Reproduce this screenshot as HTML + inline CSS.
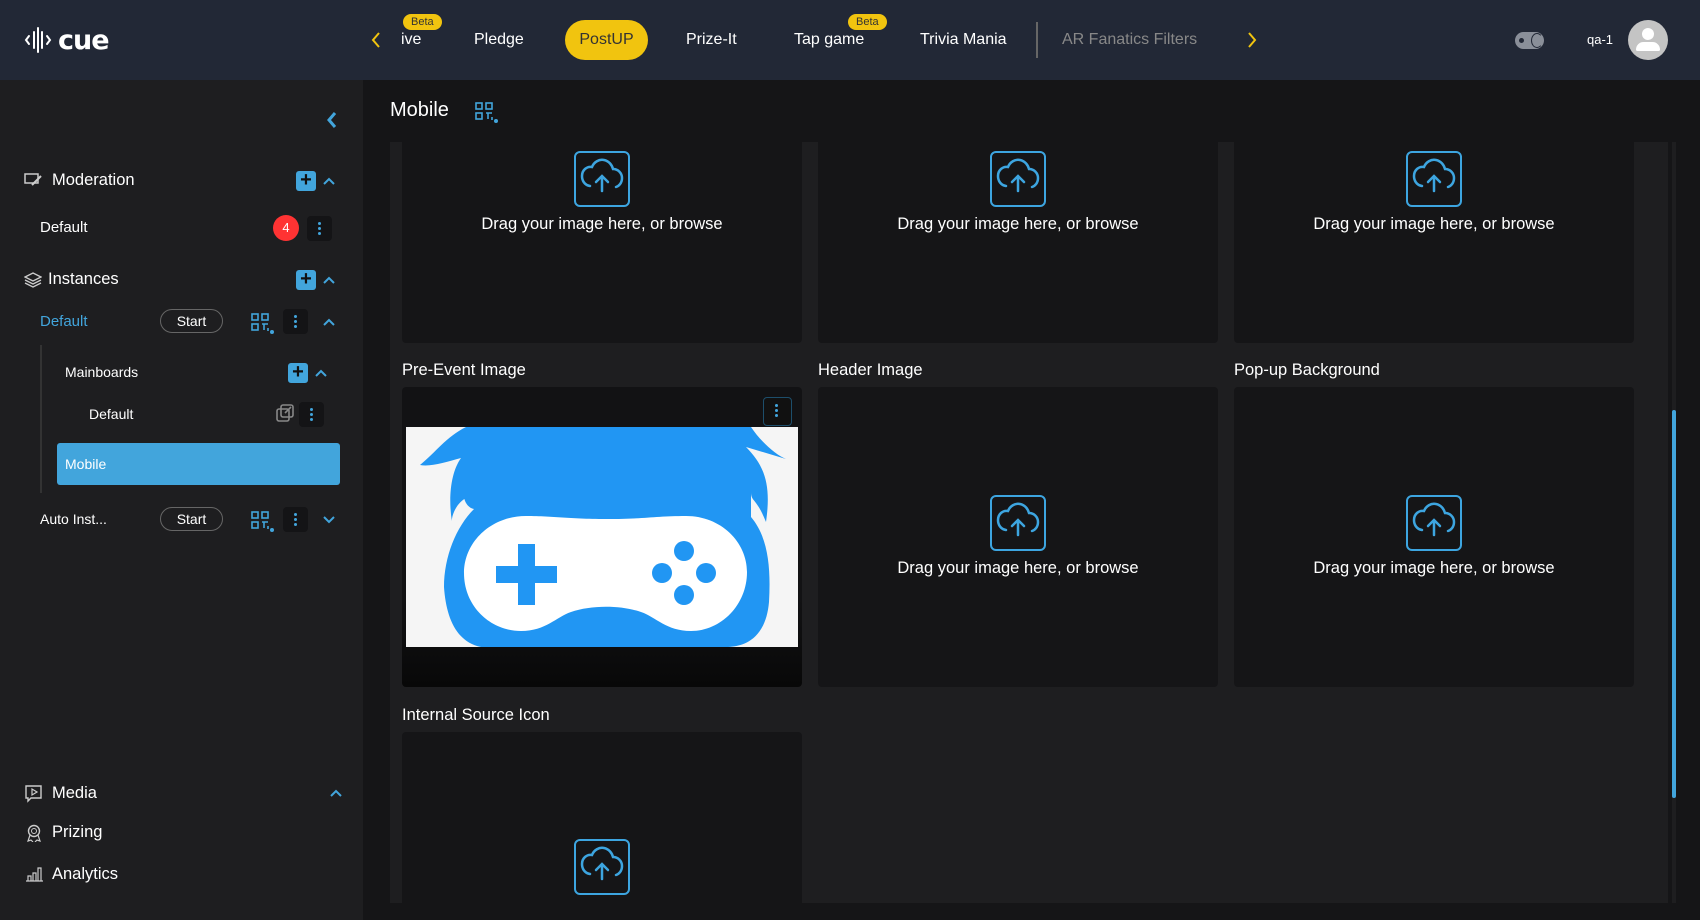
<!DOCTYPE html>
<html><head><meta charset="utf-8">
<style>
*{box-sizing:border-box;margin:0;padding:0}
body{width:1700px;height:920px;overflow:hidden;background:#151517;font-family:"Liberation Sans",sans-serif;color:#fff;position:relative}
.abs{position:absolute}
.hdr{left:0;top:0;width:1700px;height:80px;background:#222836}
.nav{top:31px;font-size:16px;color:#fff;white-space:nowrap}
.beta{background:#f1c40f;color:#333;font-size:11px;border-radius:9px;padding:2px 8px;top:14px}
.side{left:0;top:80px;width:363px;height:840px;background:#1e1e20}
.t{font-size:15px;color:#fff;white-space:nowrap}
.plus{width:20px;height:20px;background:#42a5dc;border-radius:3px;color:#111;font-size:20px;line-height:19px;text-align:center;font-weight:bold}
.dots{width:25px;height:25px;background:#141416;border-radius:4px}
.dots:before{content:"";position:absolute;left:11px;top:6px;width:3px;height:3px;border-radius:50%;background:#42a5dc;box-shadow:0 5px 0 #42a5dc,0 10px 0 #42a5dc}
.pill{width:63px;height:24px;border:1px solid #666;border-radius:12px;font-size:14px;text-align:center;line-height:22px}
.card{background:#151517;border-radius:4px}
.up{width:56px;height:56px;border:2px solid #3da5e0;border-radius:6px}
.dt{font-size:16.5px;color:#fff;white-space:nowrap;text-align:center;width:400px}
.lbl{font-size:16.5px;color:#fff}
</style></head><body>
<div class="abs hdr"></div>
<svg class="abs" style="left:24px;top:24px" width="100" height="32" viewBox="0 0 100 32">
<g stroke="#fff" stroke-width="2" fill="none" stroke-linecap="round">
<path d="M5 12l-3 4 3 4M10 8v16M14 4v24M18 8v16M23 12l3 4-3 4"/></g>
<text x="34" y="25" font-family="DejaVu Sans" font-weight="bold" font-size="27" fill="#fff" letter-spacing="-1">cue</text></svg>
<svg class="abs" style="left:370px;top:31px" width="12" height="18"><path d="M9 2L3 9l6 7" stroke="#f1c40f" stroke-width="2" fill="none"/></svg>
<div class="abs beta" style="left:403px">Beta</div>
<div class="abs nav" style="left:401px">ive</div>
<div class="abs nav" style="left:474px">Pledge</div>
<div class="abs" style="left:565px;top:20px;width:83px;height:40px;border-radius:20px;background:#f1c40f;color:#333;font-size:16px;text-align:center;line-height:40px">PostUP</div>
<div class="abs nav" style="left:686px">Prize-It</div>
<div class="abs beta" style="left:848px">Beta</div>
<div class="abs nav" style="left:794px">Tap game</div>
<div class="abs nav" style="left:920px">Trivia Mania</div>
<div class="abs" style="left:1036px;top:22px;width:2px;height:36px;background:#666"></div>
<div class="abs nav" style="left:1062px;color:#888">AR Fanatics Filters</div>
<svg class="abs" style="left:1246px;top:31px" width="12" height="18"><path d="M3 2l6 7-6 7" stroke="#f1c40f" stroke-width="2" fill="none"/></svg>
<div class="abs" style="left:1515px;top:32px;width:29px;height:17px;border-radius:9px;background:#8a8f99"></div>
<div class="abs" style="left:1519px;top:38px;width:5px;height:5px;border-radius:50%;background:#222836"></div>
<div class="abs" style="left:1531px;top:33px;width:12px;height:15px;border-radius:50%;border:1.5px solid #222836;border-right-color:transparent"></div>
<div class="abs" style="left:1587px;top:32px;font-size:13px">qa-1</div>
<div class="abs" style="left:1628px;top:20px;width:40px;height:40px;border-radius:50%;background:#c4c4c4"></div>
<div class="abs" style="left:1642px;top:28px;width:12px;height:12px;border-radius:50%;background:#fff"></div>
<div class="abs" style="left:1636px;top:42px;width:24px;height:9px;border-radius:10px 10px 2px 2px;background:#fff"></div>

<div class="abs side"></div>
<svg class="abs" style="left:326px;top:111px" width="12" height="18"><path d="M9 2L3 9l6 7" stroke="#42a5dc" stroke-width="3" fill="none"/></svg>

<svg class="abs" style="left:24px;top:172px" width="20" height="16"><rect x="1" y="2" width="13" height="9" fill="none" stroke="#ccc" stroke-width="1.5"/><path d="M8 13l9-9" stroke="#ccc" stroke-width="2"/></svg>
<div class="abs t" style="left:52px;top:171px;font-size:16.5px">Moderation</div>
<div class="abs plus" style="left:296px;top:171px">+</div>
<svg class="abs" style="left:322px;top:176px" width="14" height="10"><path d="M2 8l5-5 5 5" stroke="#42a5dc" stroke-width="2" fill="none"/></svg>
<div class="abs t" style="left:40px;top:219px">Default</div>
<div class="abs" style="left:273px;top:215px;width:26px;height:26px;border-radius:50%;background:#f33;font-size:13px;text-align:center;line-height:26px">4</div>
<div class="abs dots" style="left:307px;top:216px"></div>

<svg class="abs" style="left:24px;top:272px" width="18" height="16"><path d="M9 1l8 4-8 4-8-4zM1 8l8 4 8-4M1 11l8 4 8-4" stroke="#ccc" stroke-width="1.3" fill="none"/></svg>
<div class="abs t" style="left:48px;top:270px;font-size:16.5px">Instances</div>
<div class="abs plus" style="left:296px;top:270px">+</div>
<svg class="abs" style="left:322px;top:275px" width="14" height="10"><path d="M2 8l5-5 5 5" stroke="#42a5dc" stroke-width="2" fill="none"/></svg>

<div class="abs t" style="left:40px;top:313px;color:#42a5dc">Default</div>
<div class="abs pill" style="left:160px;top:309px">Start</div>
<svg class="abs" style="left:251px;top:313px" width="25" height="22"><g stroke="#42a5dc" stroke-width="1.6" fill="none"><rect x="1" y="1" width="6" height="6"/><rect x="11" y="1" width="6" height="6"/><rect x="1" y="11" width="6" height="6"/><path d="M11 11h6M13 11v6M17 15v3"/></g><circle cx="21" cy="19" r="2" fill="#42a5dc"/></svg>
<div class="abs dots" style="left:283px;top:309px"></div>
<svg class="abs" style="left:322px;top:317px" width="14" height="10"><path d="M2 8l5-5 5 5" stroke="#42a5dc" stroke-width="2" fill="none"/></svg>
<div class="abs" style="left:40px;top:345px;width:2px;height:148px;background:#333"></div>
<div class="abs t" style="left:65px;top:364px;font-size:14px">Mainboards</div>
<div class="abs plus" style="left:288px;top:363px">+</div>
<svg class="abs" style="left:314px;top:368px" width="14" height="10"><path d="M2 8l5-5 5 5" stroke="#42a5dc" stroke-width="2" fill="none"/></svg>
<div class="abs t" style="left:89px;top:406px;font-size:14px">Default</div>
<svg class="abs" style="left:276px;top:404px" width="19" height="19"><g stroke="#888" stroke-width="1.6" fill="none"><rect x="1" y="5" width="12" height="12" rx="2"/><rect x="5" y="1" width="12" height="12" rx="2"/><path d="M9 9l6-6"/></g></svg>
<div class="abs dots" style="left:299px;top:402px"></div>
<div class="abs" style="left:57px;top:443px;width:283px;height:42px;background:#42a5dc;border-radius:3px"></div>
<div class="abs t" style="left:65px;top:456px;font-size:14px">Mobile</div>
<div class="abs t" style="left:40px;top:511px;font-size:14px">Auto Inst...</div>
<div class="abs pill" style="left:160px;top:507px">Start</div>
<svg class="abs" style="left:251px;top:511px" width="25" height="22"><g stroke="#42a5dc" stroke-width="1.6" fill="none"><rect x="1" y="1" width="6" height="6"/><rect x="11" y="1" width="6" height="6"/><rect x="1" y="11" width="6" height="6"/><path d="M11 11h6M13 11v6M17 15v3"/></g><circle cx="21" cy="19" r="2" fill="#42a5dc"/></svg>
<div class="abs dots" style="left:283px;top:507px"></div>
<svg class="abs" style="left:322px;top:515px" width="14" height="10"><path d="M2 2l5 5 5-5" stroke="#42a5dc" stroke-width="2" fill="none"/></svg>

<svg class="abs" style="left:24px;top:785px" width="20" height="18"><path d="M2 1h15v12H7l-3 3v-3H2z" stroke="#ccc" stroke-width="1.4" fill="none"/><path d="M8 4v6l5-3z" stroke="#ccc" stroke-width="1.2" fill="none"/></svg>
<div class="abs t" style="left:52px;top:784px;font-size:16.5px">Media</div>
<svg class="abs" style="left:329px;top:788px" width="14" height="10"><path d="M2 8l5-5 5 5" stroke="#42a5dc" stroke-width="2" fill="none"/></svg>
<svg class="abs" style="left:26px;top:824px" width="16" height="18"><circle cx="8" cy="7" r="5.5" stroke="#ccc" stroke-width="1.4" fill="none"/><circle cx="8" cy="7" r="2.5" stroke="#ccc" fill="none"/><path d="M4 11l-2 6 3-1 2 2M12 11l2 6-3-1-2 2" stroke="#ccc" stroke-width="1.2" fill="none"/></svg>
<div class="abs t" style="left:52px;top:823px;font-size:16.5px">Prizing</div>
<svg class="abs" style="left:25px;top:866px" width="18" height="16"><path d="M1 15h17M3 15v-5h3v5M8 15V7h3v8M13 15V2h3v13" stroke="#ccc" stroke-width="1.2" fill="none"/></svg>
<div class="abs t" style="left:52px;top:865px;font-size:16.5px">Analytics</div>

<!-- main -->
<div class="abs" style="left:390px;top:99px;font-size:20px">Mobile</div>
<svg class="abs" style="left:475px;top:102px" width="25" height="22"><g stroke="#42a5dc" stroke-width="1.6" fill="none"><rect x="1" y="1" width="6" height="6"/><rect x="11" y="1" width="6" height="6"/><rect x="1" y="11" width="6" height="6"/><path d="M11 11h6M13 11v6M17 15v3"/></g><circle cx="21" cy="19" r="2" fill="#42a5dc"/></svg>
<div class="abs" style="left:390px;top:142px;width:1278px;height:761px;background:#1e1e20"></div>
<div class="abs" style="left:1672px;top:142px;width:4px;height:761px;background:#1e1e20"></div>
<div class="abs" style="left:1672px;top:410px;width:4px;height:388px;background:#42a5dc;border-radius:2px"></div>

<div class="abs card" style="left:402px;top:142px;width:400px;height:201px;border-radius:0 0 4px 4px"></div>
<div class="abs card" style="left:818px;top:142px;width:400px;height:201px;border-radius:0 0 4px 4px"></div>
<div class="abs card" style="left:1234px;top:142px;width:400px;height:201px;border-radius:0 0 4px 4px"></div>
<div class="abs lbl" style="left:402px;top:361px">Pre-Event Image</div>
<div class="abs lbl" style="left:818px;top:361px">Header Image</div>
<div class="abs lbl" style="left:1234px;top:361px">Pop-up Background</div>
<div class="abs card" style="left:402px;top:387px;width:400px;height:300px;background:linear-gradient(#121214 70%,#080808)"></div>
<div class="abs card" style="left:818px;top:387px;width:400px;height:300px"></div>
<div class="abs card" style="left:1234px;top:387px;width:400px;height:300px"></div>
<div class="abs lbl" style="left:402px;top:706px">Internal Source Icon</div>
<div class="abs card" style="left:402px;top:732px;width:400px;height:171px;border-radius:4px 4px 0 0"></div>

<svg class="abs" style="left:406px;top:427px" width="392" height="220" viewBox="0 0 392 220">
<rect width="392" height="220" fill="#f5f5f5"/>
<path d="M60 0H345C355 15 370 28 380 32L340 20C360 40 365 60 360 95C350 70 345 75 345 65V90C362 110 365 140 363 175C360 210 340 220 320 220H75C50 215 40 190 38 160C38 130 50 100 68 82C58 80 56 65 60 68L62 70C50 75 45 90 46 95C42 70 45 45 55 31C40 35 25 40 14 38C30 25 40 10 60 0Z" fill="#2196f3"/>
<path d="M120 89C150 89 160 92 200 92C240 92 250 89 280 89C315 89 341 115 341 145C341 178 315 204 285 204C260 204 250 190 235 185C215 178 185 178 165 185C150 190 140 204 115 204C85 204 58 180 58 146C58 115 85 89 120 89Z" fill="#fff"/>
<rect x="90" y="139" width="61" height="17" fill="#2196f3"/><rect x="112" y="117" width="17" height="61" fill="#2196f3"/>
<circle cx="278" cy="124" r="10" fill="#2196f3"/><circle cx="278" cy="168" r="10" fill="#2196f3"/><circle cx="256" cy="146" r="10" fill="#2196f3"/><circle cx="300" cy="146" r="10" fill="#2196f3"/>
</svg>
<div class="abs dots" style="left:763px;top:397px;width:29px;height:29px;border:1px solid #1d4e6b;background:#111"></div>

<svg width="0" height="0" style="position:absolute"><defs><g id="cl"><path d="M14 33C8 32 6 27 6 23C6 17 11 13 16 14C18 9 23 6 28 7C33 8 36 12 37 16C42 16 46 20 46 25C46 30 43 33 40 34" stroke="#3da5e0" stroke-width="2.5" fill="none" stroke-linecap="round"/><path d="M26 38V24M20 29l6-6 6 6" stroke="#3da5e0" stroke-width="2.5" fill="none" stroke-linecap="round"/></g></defs></svg>

<div class="abs up" style="left:574px;top:151px"><svg width="52" height="52"><use href="#cl"/></svg></div>
<div class="abs dt" style="left:402px;top:215px">Drag your image here, or browse</div>
<div class="abs up" style="left:990px;top:151px"><svg width="52" height="52"><use href="#cl"/></svg></div>
<div class="abs dt" style="left:818px;top:215px">Drag your image here, or browse</div>
<div class="abs up" style="left:1406px;top:151px"><svg width="52" height="52"><use href="#cl"/></svg></div>
<div class="abs dt" style="left:1234px;top:215px">Drag your image here, or browse</div>
<div class="abs up" style="left:990px;top:495px"><svg width="52" height="52"><use href="#cl"/></svg></div>
<div class="abs dt" style="left:818px;top:559px">Drag your image here, or browse</div>
<div class="abs up" style="left:1406px;top:495px"><svg width="52" height="52"><use href="#cl"/></svg></div>
<div class="abs dt" style="left:1234px;top:559px">Drag your image here, or browse</div>
<div class="abs up" style="left:574px;top:839px"><svg width="52" height="52"><use href="#cl"/></svg></div>
</body></html>
